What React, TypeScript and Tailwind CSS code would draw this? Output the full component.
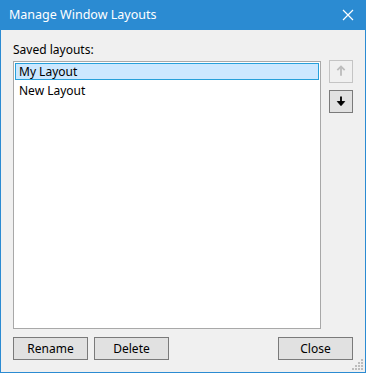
import React from "react";

const font = { fontFamily: '"Noto Sans", "Open Sans", sans-serif' };

function UpArrow({ color }: { color: string }) {
  return (
    <svg width="24" height="23" viewBox="0 0 24 23">
      <path d="M12 6 L12 16" stroke={color} strokeWidth="2" fill="none" />
      <path d="M8 10 L12 6 L16 10" stroke={color} strokeWidth="2" fill="none" />
    </svg>
  );
}

function DownArrow({ color }: { color: string }) {
  return (
    <svg width="24" height="23" viewBox="0 0 24 23">
      <path d="M12 6 L12 15" stroke={color} strokeWidth="2" fill="none" />
      <path d="M8 11.5 L12 16 L16 11.5 Z" stroke={color} strokeWidth="1" fill={color} />
    </svg>
  );
}

export default function App() {
  return (
    <div
      className="relative w-[366px] h-[373px] flex flex-col bg-[#2b8bd2] px-[1px] pb-[1px] text-[12px] leading-[16px] text-black"
      style={font}
    >
      <div className="h-[30px] shrink-0 flex items-center justify-between pl-[8px] pr-[8px] text-white">
        <span className="text-[12.5px]">Manage Window Layouts</span>
        <svg width="12" height="12" viewBox="0 0 12 12" className="mr-[3px]">
          <path d="M1 1 L11 11 M11 1 L1 11" stroke="#ffffff" strokeWidth="1.2" fill="none" />
        </svg>
      </div>
      <div className="flex-1 bg-[#f0f0f0] flex flex-col px-[12px] pt-[12px] pb-[12px]">
        <div className="h-[16px]">Saved layouts:</div>
        <div className="mt-[3px] flex gap-[8px]">
          <div className="w-[308px] h-[268px] border border-[#a8a8a8] bg-white p-[1px] flex flex-col">
            <div className="h-[17px] border border-[#26a0da] bg-[#cce8ff] pl-[3px] flex items-center">
              My Layout
            </div>
            <div className="mt-[2px] h-[17px] pl-[4px] flex items-center">New Layout</div>
          </div>
          <div className="flex flex-col gap-[7px] -mt-[1px]">
            <div className="w-[24px] h-[23px] border border-[#c4c4c4] bg-[#f0f0f0] flex items-center justify-center">
              <UpArrow color="#bcbcbc" />
            </div>
            <div className="w-[24px] h-[23px] border border-[#7a7a7a] bg-[#e1e1e1] flex items-center justify-center">
              <DownArrow color="#000000" />
            </div>
          </div>
        </div>
        <div className="mt-[8px] flex items-center">
          <div className="w-[75px] h-[23px] border border-[#7a7a7a] bg-[#e1e1e1] flex items-center justify-center">
            Rename
          </div>
          <div className="ml-[6px] w-[75px] h-[23px] border border-[#7a7a7a] bg-[#e1e1e1] flex items-center justify-center">
            Delete
          </div>
          <div className="ml-auto w-[75px] h-[23px] border border-[#7a7a7a] bg-[#e1e1e1] flex items-center justify-center">
            Close
          </div>
        </div>
      </div>
      <svg className="absolute right-[2px] bottom-[2px]" width="12" height="12" viewBox="0 0 12 12">
        {[
          [9, 0],
          [9, 3],
          [6, 3],
          [9, 6],
          [6, 6],
          [3, 6],
          [9, 9],
          [6, 9],
          [3, 9],
          [0, 9],
        ].map(([x, y], i) => (
          <rect key={i} x={x} y={y} width="2" height="2" fill="#bdbdbd" />
        ))}
      </svg>
    </div>
  );
}
